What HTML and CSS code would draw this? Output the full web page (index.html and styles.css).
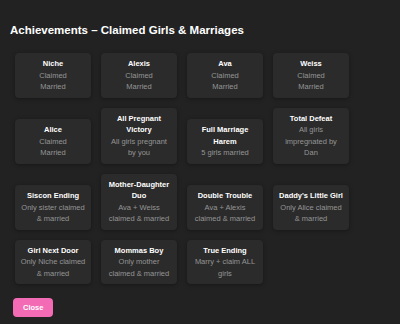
FILE: index.html
```html
<!DOCTYPE html>
<html lang="en">
  <head>
    <meta charset="UTF-8" />
    <title>Achievements</title>
    <link rel="stylesheet" href="styles.css">
  </head>
  <body>
    <div class="modal">
      <h2>Achievements – Claimed Girls &amp; Marriages</h2>
      <div class="grid">
        <div class="card"><h3>Niche</h3><p>Claimed</p><p>Married</p></div>
        <div class="card"><h3>Alexis</h3><p>Claimed</p><p>Married</p></div>
        <div class="card"><h3>Ava</h3><p>Claimed</p><p>Married</p></div>
        <div class="card"><h3>Weiss</h3><p>Claimed</p><p>Married</p></div>

        <div class="card"><h3>Alice</h3><p>Claimed</p><p>Married</p></div>
        <div class="card"><h3>All Pregnant Victory</h3><p>All girls pregnant by you</p></div>
        <div class="card"><h3>Full Marriage Harem</h3><p>5 girls married</p></div>
        <div class="card"><h3>Total Defeat</h3><p>All girls impregnated by Dan</p></div>

        <div class="card"><h3>Siscon Ending</h3><p>Only sister claimed &amp; married</p></div>
        <div class="card"><h3>Mother-Daughter Duo</h3><p>Ava + Weiss claimed &amp; married</p></div>
        <div class="card"><h3>Double Trouble</h3><p>Ava + Alexis claimed &amp; married</p></div>
        <div class="card"><h3>Daddy's Little Girl</h3><p>Only Alice claimed &amp; married</p></div>

        <div class="card"><h3>Girl Next Door</h3><p>Only Niche claimed &amp; married</p></div>
        <div class="card"><h3>Mommas Boy</h3><p>Only mother claimed &amp; married</p></div>
        <div class="card"><h3>True Ending</h3><p>Marry + claim ALL girls</p></div>
      </div>
      <button class="close-btn">Close</button>
    </div>
  </body>
</html>
```

FILE: styles.css
```css
:root {
  --bg-color: #222222;
  --card-color: #2b2b2b;
  --muted-color: #959595;
  --accent-color: #f46bb5;
}
body {
  margin: 0;
  background: var(--bg-color);
  color: #fff;
  font-family: "Liberation Sans", Arial, sans-serif;
}
.modal {
  padding: 22px 10px 10px 10px;
}
h2 {
  font-size: 11.5px;
  line-height: 16px;
  margin: 0 0 15px;
}
.grid {
  display: grid;
  grid-template-columns: repeat(4, 76px);
  gap: 10px;
  align-items: last baseline;
  padding-left: 5px;
}
.card {
  background: var(--card-color);
  border-radius: 4px;
  padding: 5px 5.25px;
  text-align: center;
  font-size: 7.5px;
  line-height: 11.5px;
  box-shadow: 0 1px 4px rgba(0, 0, 0, 0.35);
}
.card h3 {
  margin: 0;
  font-size: 7.5px;
  font-weight: bold;
  color: #fff;
}
.card p {
  margin: 0;
  color: var(--muted-color);
}
.close-btn {
  margin: 14px 0 0 3px;
  padding: 5px 10px;
  background: var(--accent-color);
  color: #fff;
  border: none;
  border-radius: 4px;
  font-family: inherit;
  font-size: 7.5px;
  font-weight: bold;
  line-height: 9px;
  cursor: pointer;
}
```
